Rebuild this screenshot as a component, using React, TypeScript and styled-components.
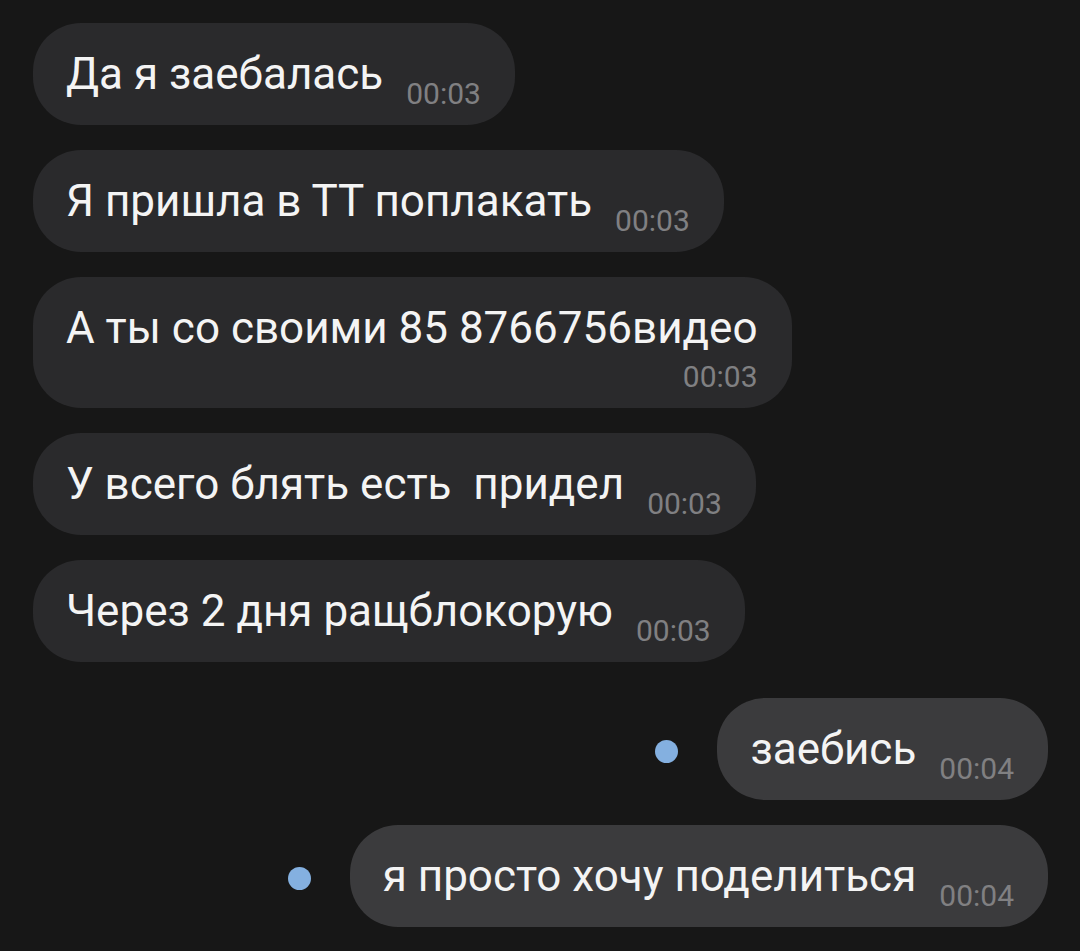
import React from 'react';
import styled, { createGlobalStyle } from 'styled-components';

const GlobalStyle = createGlobalStyle`
  html, body {
    margin: 0;
    padding: 0;
    background: #171717;
  }
  body {
    font-family: Roboto, 'Noto Sans', sans-serif;
  }
`;

type Message = {
  text: string;
  time: string;
  outgoing?: boolean;
  stacked?: boolean;
  unread?: boolean;
  groupStart?: boolean;
};

const messages: Message[] = [
  { text: 'Да я заебалась', time: '00:03' },
  { text: 'Я пришла в ТТ поплакать', time: '00:03' },
  { text: 'А ты со своими 85 8766756видео', time: '00:03', stacked: true },
  { text: 'У всего блять есть  придел', time: '00:03' },
  { text: 'Через 2 дня ращблокорую', time: '00:03' },
  { text: 'заебись', time: '00:04', outgoing: true, unread: true, groupStart: true },
  { text: 'я просто хочу поделиться', time: '00:04', outgoing: true, unread: true },
];

const App = () => (
  <>
    <GlobalStyle />
    <Screen>
      {messages.map((m, i) => (
        <Row key={i} outgoing={!!m.outgoing} groupStart={!!m.groupStart}>
          {m.unread && <UnreadDot />}
          <Bubble outgoing={!!m.outgoing} stacked={!!m.stacked}>
            <Text stacked={!!m.stacked}>{m.text.replace(/  /g, ' \u00a0')}</Text>
            <Time stacked={!!m.stacked}>{m.time}</Time>
          </Bubble>
        </Row>
      ))}
    </Screen>
  </>
);

export default App;

const Screen = styled.div`
  display: flex;
  flex-direction: column;
  gap: 25px;
  width: 1080px;
  height: 951px;
  box-sizing: border-box;
  padding: 23px 32px 0 33px;
  overflow: hidden;
  background: #171717;
`;

const Row = styled.div<{ outgoing: boolean; groupStart: boolean }>`
  display: flex;
  align-items: center;
  justify-content: ${({ outgoing }) => (outgoing ? 'flex-end' : 'flex-start')};
  gap: 39px;
  margin-top: ${({ groupStart }) => (groupStart ? '11px' : '0')};
`;

const UnreadDot = styled.span`
  width: 23px;
  height: 23px;
  margin-top: 4px;
  border-radius: 50%;
  background: #84b0e0;
  flex-shrink: 0;
`;

const Bubble = styled.div<{ outgoing: boolean; stacked: boolean }>`
  display: flex;
  flex-direction: ${({ stacked }) => (stacked ? 'column' : 'row')};
  align-items: flex-end;
  padding: 0 34px 0 33px;
  border-radius: 48px;
  background: ${({ outgoing }) => (outgoing ? '#3b3b3d' : '#2a2a2c')};
`;

const Text = styled.span<{ stacked: boolean }>`
  align-self: flex-start;
  padding: ${({ stacked }) => (stacked ? '25px 0 0' : '25px 0')};
  font-size: 44px;
  line-height: 52px;
  color: #f4f4f4;
  white-space: nowrap;
`;

const Time = styled.span<{ stacked: boolean }>`
  margin: ${({ stacked }) => (stacked ? '6px 0 14px 0' : '0 0 14px 23px')};
  font-size: 30px;
  line-height: 34px;
  color: #808082;
`;
